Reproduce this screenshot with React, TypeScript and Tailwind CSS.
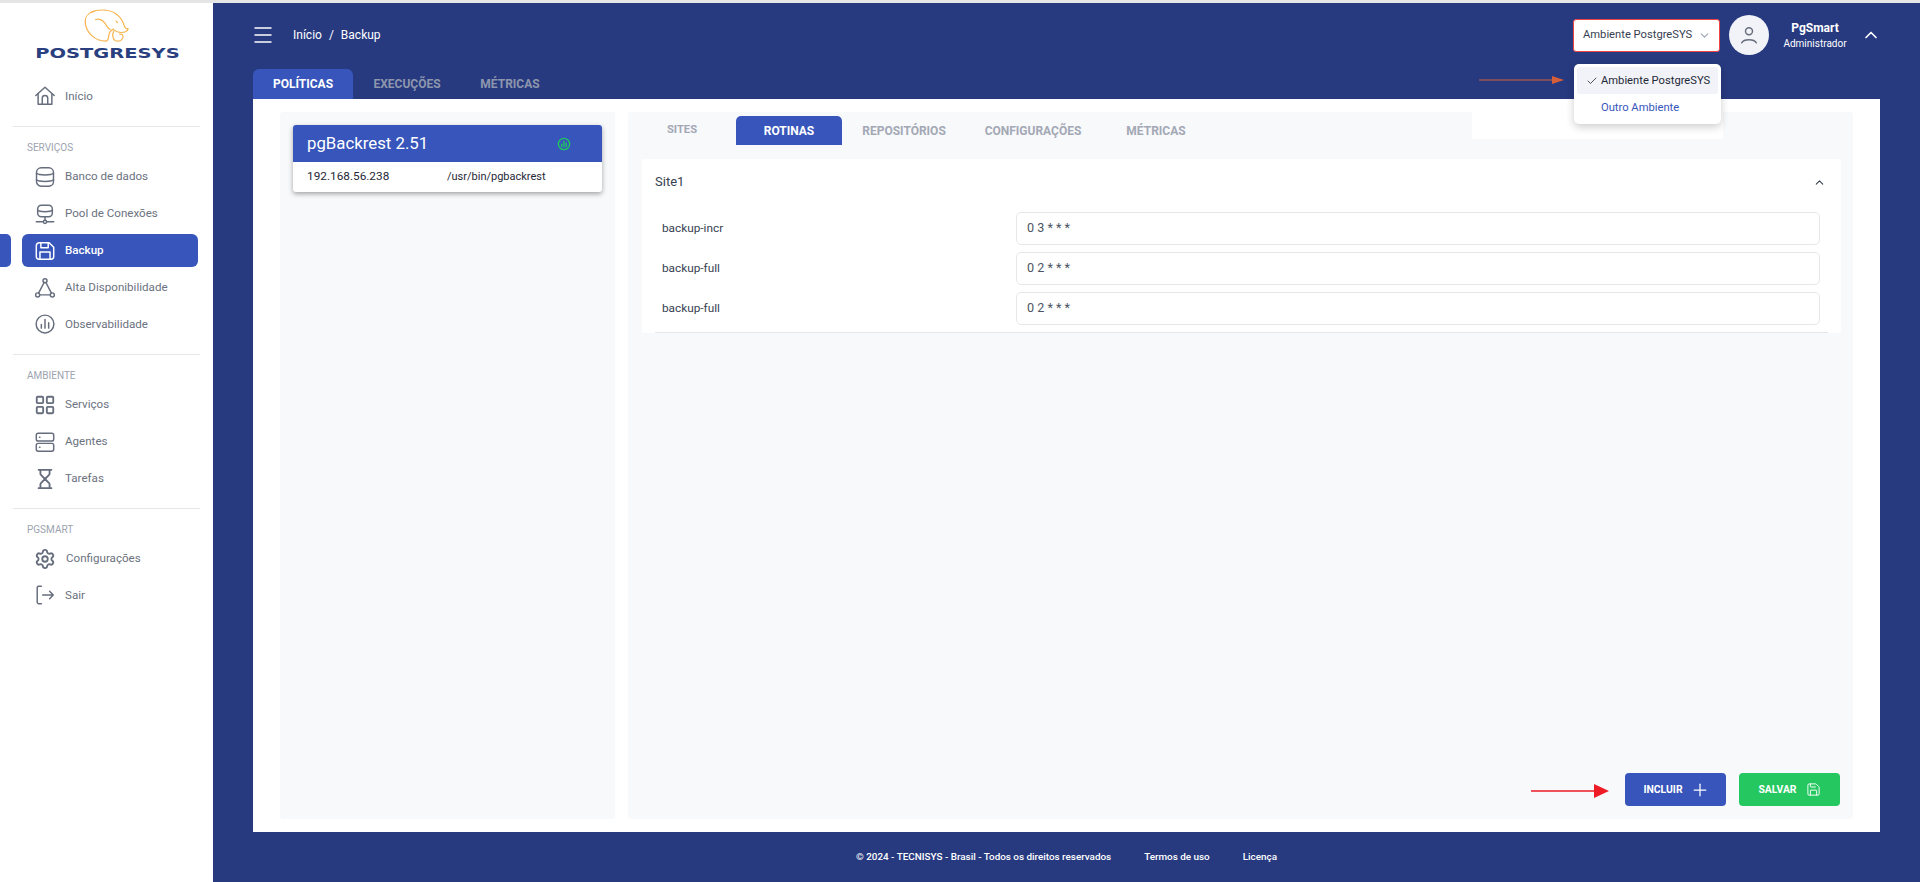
import React from "react";
import { Check, ChevronDown, ChevronUp, Hourglass, LayoutGrid, Menu, Plus, Save, Settings } from "lucide-react";

type IP = { className?: string };
const S = ({ className, children, vb = "0 0 24 24", sw = 1.6 }: IP & { children: React.ReactNode; vb?: string; sw?: number }) => (
  <svg viewBox={vb} fill="none" stroke="currentColor" strokeWidth={sw} strokeLinecap="round" strokeLinejoin="round" className={className}>
    {children}
  </svg>
);
const Home = (p: IP) => (
  <S {...p}>
    <path d="M2 11.500 12 2.500l10 9" />
    <path d="M4.500 9.500v11.500h15V9.500" />
    <path d="M9 21v-6.500a3 3 0 0 1 6 0V21" />
  </S>
);
const Db = (p: IP) => (
  <S {...p}>
    <rect x="2.750" y="2" width="18.500" height="20" rx="5" />
    <path d="M2.750 8c2.500 2.400 16 2.400 18.500 0M2.750 15c2.500 2.400 16 2.400 18.500 0" />
  </S>
);
const Pool = (p: IP) => (
  <S {...p}>
    <rect x="4" y="2.500" width="16" height="12.500" rx="4" />
    <path d="M4 8c2 2 14 2 16 0M12 15v4M2.500 20.500H10M14 20.500h7.500" />
    <circle cx="12" cy="20.500" r="1.800" />
  </S>
);
const Floppy = (p: IP) => (
  <S {...p}>
    <path d="M6 3h10.500L21.500 8v10a3 3 0 0 1-3 3H5.500a3 3 0 0 1-3-3V6.500A3.500 3.500 0 0 1 6 3Z" />
    <path d="M7.500 3v5.500h8V3M6.500 21v-8h11v8" />
  </S>
);
const Ha = (p: IP) => (
  <S {...p}>
    <circle cx="12" cy="4" r="2.200" />
    <circle cx="4" cy="19.500" r="2.200" />
    <circle cx="20" cy="19.500" r="2.200" />
    <path d="M11 6 5 17.500M13 6l6 11.500M6.200 19.500h11.600" />
  </S>
);
const Chart = (p: IP) => (
  <S {...p}>
    <circle cx="12" cy="12" r="9.700" />
    <path d="M8 16.500v-4M12 16.500V7M16 16.500v-6" />
  </S>
);
const Srv = (p: IP) => (
  <S {...p}>
    <rect x="2.500" y="2.500" width="19" height="8.500" rx="2" />
    <rect x="2.500" y="13.500" width="19" height="8.500" rx="2" />
    <path d="M6 6.700h.5M6 17.700h.5" />
  </S>
);
const Exit = (p: IP) => (
  <S {...p}>
    <path d="M8 2.500H5A1.500 1.500 0 0 0 3.500 4v16A1.500 1.500 0 0 0 5 21.500h3" />
    <path d="M9.500 12H21M17 8l4 4-4 4" />
  </S>
);
const Person = (p: IP) => (
  <S {...p}>
    <circle cx="12" cy="8" r="3.800" />
    <path d="M4 20.500c2.500-4.500 13.500-4.500 16 0" />
  </S>
);

const Item = ({ icon: Icon, label, active, ml = "ml-[9px]" }: { icon: React.ComponentType<IP>; label: string; active?: boolean; ml?: string }) => (
  <div className="h-[36.8px] flex items-center relative">
    {active && <div className="absolute left-0 top-[1.5px] w-[11px] h-[33px] bg-[#3755bb] rounded-r-[5px]" />}
    <div className={`ml-[22px] w-[176px] h-[33px] flex items-center rounded-[6px] pl-[12px] ${active ? "bg-[#3755bb] text-white" : "text-[#6b7280]"}`}>
      <Icon className={`w-[22px] h-[22px] shrink-0 ${active ? "text-white" : "text-[#666d7c]"}`} />
      <span className={`${ml} text-[11.6px] leading-none ${active ? "font-medium" : ""}`}>{label}</span>
    </div>
  </div>
);

const Section = ({ label, mb = "mb-[6px]" }: { label: string; mb?: string }) => (
  <div className={`ml-[27px] text-[10px] leading-none text-[#9ca3af] mt-[16px] h-[10px] ${mb}`}>{label}</div>
);
const Rule = () => <div className="mx-[13px] h-px bg-[#e5e7eb]" />;

const Logo = () => (
  <div className="h-[62px] relative">
    <svg viewBox="190 20 145 110" fill="none" stroke="#f8b550" strokeWidth="3.600" strokeLinecap="round" strokeLinejoin="round" className="absolute left-[83px] top-[4px] w-[48px] h-[37px]">
      <path d="M225 32C205 36 195 50 197 68c3 28 28 54 62 54 8 0 8-8 9-18 1-8 6-14 14-18" />
      <path d="M215 34c15-7 50-10 72 4 16 10 24 26 28 38 1 5 5 9 11 9" />
      <path d="M326 85c0 8-12 12-24 11-8-1-14-4-18-8" />
      <path d="M283 92c-5 10-5 24 6 29 10 4 22-2 22-12 0-6-5-9-10-8" />
      <path d="M228 57c12-4 24 2 34 20 3 5 6 8 10 10" />
      <path d="M290 62l4 4" />
    </svg>
    <div className="absolute left-[36px] top-[43px] w-[143px] text-center text-[#2a3f80] text-[14px] leading-[14px] font-bold scale-x-[1.39] whitespace-nowrap" style={{ fontFamily: '"DejaVu Sans", sans-serif' }}>
      POSTGRESYS
    </div>
  </div>
);

const Sidebar = () => (
  <aside className="w-[213px] shrink-0 bg-white flex flex-col">
    <Logo />
    <div className="mt-[13px]">
      <Item icon={Home} label="Início" />
    </div>
    <div className="mt-[11px]">
      <Rule />
    </div>
    <Section label="SERVIÇOS" />
    <Item icon={Db} label="Banco de dados" />
    <Item icon={Pool} label="Pool de Conexões" />
    <Item icon={Floppy} label="Backup" active />
    <Item icon={Ha} label="Alta Disponibilidade" />
    <Item icon={Chart} label="Observabilidade" />
    <div className="mt-[11px]">
      <Rule />
    </div>
    <Section label="AMBIENTE" />
    <Item icon={LayoutGrid} label="Serviços" />
    <Item icon={Srv} label="Agentes" />
    <Item icon={Hourglass} label="Tarefas" />
    <div className="mt-[11px]">
      <Rule />
    </div>
    <Section label="PGSMART" mb="mb-[5px]" />
    <Item icon={Settings} label="Configurações" ml="ml-[10px]" />
    <Item icon={Exit} label="Sair" />
  </aside>
);

const Routine = ({ name, value }: { name: string; value: string }) => (
  <div className="flex items-center h-[33px]">
    <div className="w-[355px] shrink-0 pl-[1px] text-[11.8px] text-[#374151]">{name}</div>
    <div className="flex-1 h-full border border-[#e5e7eb] rounded-[5px] bg-white flex items-center pl-[10px] text-[12.600px] text-[#4b5563]">{value}</div>
  </div>
);

export default function App() {
  return (
    <div className="w-[1920px] h-[882px] overflow-hidden flex flex-col bg-white relative" style={{ fontFamily: 'Roboto, "Noto Sans", sans-serif' }}>
      <div className="h-[3px] bg-[#e5e5e5] shrink-0" />
      <div className="flex-1 flex min-h-0">
        <Sidebar />
        <main className="flex-1 flex flex-col bg-[#273a7f] min-w-0">
          <header className="h-[64px] shrink-0 flex items-center pl-[38px] pr-[39px] text-white">
            <Menu className="w-[24px] h-[24px]" strokeWidth={1.5} />
            <div className="ml-[18px] text-[12px] flex gap-[7px]">
              <span>Início</span>
              <span>/</span>
              <span>Backup</span>
            </div>
            <div className="ml-auto w-[147px] h-[33px] bg-white border-[1.5px] border-[#ef4444] rounded-[3px] flex items-center pl-[9px] text-[11.2px] text-[#374151]">
              <span className="whitespace-nowrap">Ambiente PostgreSYS</span>
              <ChevronDown className="w-[13px] h-[13px] ml-[6px] text-[#9ca3af]" />
            </div>
            <div className="ml-[9px] w-[40px] h-[40px] rounded-full bg-[#f1f3f8] flex items-center justify-center text-[#666d7c]">
              <Person className="w-[22px] h-[22px]" />
            </div>
            <div className="w-[92px] flex flex-col items-center leading-none">
              <span className="text-[12px] font-bold">PgSmart</span>
              <span className="text-[10px] mt-[5px]">Administrador</span>
            </div>
            <ChevronUp className="w-[20px] h-[20px]" strokeWidth={2} />
          </header>
          <nav className="h-[32px] shrink-0 ml-[40px] flex items-end text-[12px] font-bold text-[#8e96ae]">
            <div className="w-[100px] h-[30px] bg-[#3755bb] rounded-t-[6px] text-white flex items-center justify-center">POLÍTICAS</div>
            <div className="w-[108px] h-[30px] flex items-center justify-center">EXECUÇÕES</div>
            <div className="w-[98px] h-[30px] flex items-center justify-center">MÉTRICAS</div>
          </nav>
          <section className="h-[733px] shrink-0 mx-[40px] bg-white p-[13px] px-[27px] flex gap-[13px]">
            <div className="w-[335px] shrink-0 bg-[#f8f9fb] rounded-[3px] p-[13px] h-full">
              <div className="rounded-[3px] bg-white shadow-[0_2px_5px_rgba(0,0,0,0.35)] overflow-hidden">
                <div className="h-[37px] bg-[#3755bb] flex items-center pl-[14px] text-white text-[16.800px]">
                  <span>pgBackrest 2.51</span>
                  <S className="w-[14px] h-[14px] ml-[129px] text-[#22c55e]" sw={2.4}>
                    <circle cx="12" cy="12" r="9.700" />
                    <path d="M8 16.500v-4M12 16.500V7M16 16.500v-6" />
                  </S>
                </div>
                <div className="h-[30px] flex items-center pl-[14px] text-[#1f2937]">
                  <span className="w-[140px] text-[11.8px]">192.168.56.238</span>
                  <span className="text-[11px]">/usr/bin/pgbackrest</span>
                </div>
              </div>
            </div>
            <div className="flex-1 bg-[#f8f9fb] rounded-[3px] flex flex-col pb-[13px] pt-[4px]">
              <div className="flex h-[29px] text-[12px] font-bold text-[#a3a8b5]">
                <div className="w-[108px] flex items-center justify-center text-[11.2px]">SITES</div>
                <div className="w-[106px] bg-[#3755bb] text-white rounded-t-[5px] flex items-center justify-center">ROTINAS</div>
                <div className="w-[124px] flex items-center justify-center">REPOSITÓRIOS</div>
                <div className="w-[134px] flex items-center justify-center">CONFIGURAÇÕES</div>
                <div className="w-[112px] flex items-center justify-center">MÉTRICAS</div>
              </div>
              <div className="mt-[14px] ml-[14px] mr-[12px] bg-white">
                <div className="h-[46px] mb-[7px] pl-[13px] pr-[15px] flex items-center justify-between text-[13px] text-[#374151]">
                  <span>Site1</span>
                  <ChevronUp className="w-[13px] h-[13px]" />
                </div>
                <div className="pl-[19px] pr-[21px] flex flex-col gap-[7px]">
                  <Routine name="backup-incr" value="0 3 * * *" />
                  <Routine name="backup-full" value="0 2 * * *" />
                  <Routine name="backup-full" value="0 2 * * *" />
                </div>
                <div className="mx-[13px] mt-[7px] h-px bg-[#e5e7eb]" />
              </div>
              <div className="mt-auto pr-[13px] flex justify-end gap-[13px] text-white text-[10.4px] font-bold">
                <div className="w-[101px] h-[33px] bg-[#3755bb] rounded-[4px] flex items-center justify-center gap-[7px] pl-[2px]">
                  INCLUIR <Plus className="w-[20px] h-[20px]" strokeWidth={1.5} />
                </div>
                <div className="w-[101px] h-[33px] bg-[#25c860] rounded-[4px] flex items-center justify-center gap-[9px]">
                  SALVAR <Save className="w-[15px] h-[15px]" strokeWidth={1.5} />
                </div>
              </div>
            </div>
          </section>
          <footer className="flex-1 flex items-center justify-center gap-[33px] text-[9.9px] text-white font-medium">
            <span>© 2024 - TECNISYS - Brasil - Todos os direitos reservados</span>
            <span>Termos de uso</span>
            <span>Licença</span>
          </footer>
        </main>
      </div>

      {/* overlays */}
      <div className="absolute left-[1472px] top-[99px] w-[251px] h-[40px] bg-white" />
      <div className="absolute left-[1574px] top-[64px] w-[147px] h-[60px] bg-white rounded-[5px] shadow-[0_3px_8px_rgba(0,0,0,0.2)] p-[3px] text-[11.2px]">
        <div className="h-[27px] bg-[#f1f3f8] rounded-[3px] flex items-center pl-[9px] pt-[1px] text-[#1f2937]">
          <Check className="w-[12px] h-[12px] mr-[3px]" strokeWidth={1.6} />
          <span className="whitespace-nowrap">Ambiente PostgreSYS</span>
        </div>
        <div className="h-[27px] flex items-center pl-[24px] pt-[2px] text-[#3755bb]">Outro Ambiente</div>
      </div>
      <svg className="absolute left-[1479px] top-[74px] w-[86px] h-[12px]" viewBox="0 0 86 12">
        <path d="M0 6h74" stroke="#d65f3a" strokeWidth="1.2" />
        <path d="M73 2l12 4-12 4z" fill="#d65f3a" />
      </svg>
      <svg className="absolute left-[1531px] top-[783px] w-[79px] h-[16px]" viewBox="0 0 79 16">
        <path d="M0 8h64" stroke="#ee1c25" strokeWidth="1.6" />
        <path d="M63 1l15 7-15 7z" fill="#ee1c25" />
      </svg>
    </div>
  );
}
